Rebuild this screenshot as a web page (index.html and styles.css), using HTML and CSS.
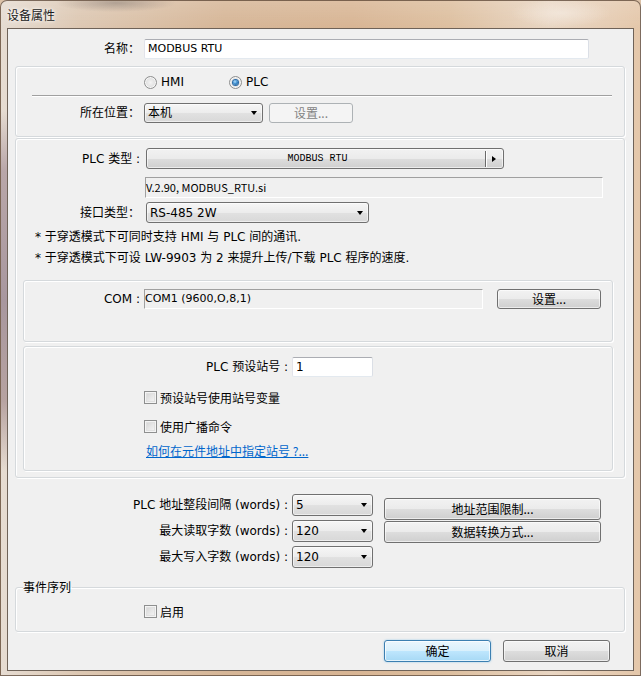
FILE: index.html
```html
<!DOCTYPE html>
<html lang="zh-CN">
<head>
<meta charset="utf-8">
<title>设备属性</title>
<link rel="stylesheet" href="styles.css">
</head>
<body>
<div class="window">
  <div class="titlebar"><span class="title">设备属性</span></div>
  <div class="client">
    <div class="row row-name">
      <span class="lbl w132">名称：</span>
      <div class="txt name-input">MODBUS RTU</div>
    </div>

    <div class="group g1">
      <div class="radios">
        <span class="opt opt-hmi"><span class="radio"></span><span>HMI</span></span>
        <span class="opt"><span class="radio on"></span><span>PLC</span></span>
      </div>
      <div class="sep"></div>
      <div class="row row-loc">
        <span class="lbl w124">所在位置：</span>
        <div class="combo loc-combo"><span class="ctext">本机</span><span class="arrow"></span></div>
        <div class="btn disabled loc-btn">设置...</div>
      </div>
    </div>

    <div class="group g2">
      <div class="row row-plc">
        <span class="lbl w124">PLC 类型 :</span>
        <div class="btn plc-btn"><span class="plc-text">MODBUS RTU</span><span class="plc-split"></span><span class="rarrow-wrap"><span class="rarrow"></span></span></div>
      </div>
      <div class="ro version">V.2.90, MODBUS_RTU.si</div>
      <div class="row row-if">
        <span class="lbl w124">接口类型：</span>
        <div class="combo if-combo"><span class="ctext">RS-485 2W</span><span class="arrow"></span></div>
      </div>
      <p class="note first">* 于穿透模式下可同时支持 HMI 与 PLC 间的通讯.</p>
      <p class="note">* 于穿透模式下可设 LW-9903 为 2 来提升上传/下载 PLC 程序的速度.</p>

      <div class="group inner com-box">
        <div class="row row-com">
          <span class="lbl w116">COM :</span>
          <div class="ro com-field">COM1 (9600,O,8,1)</div>
          <div class="btn com-btn">设置...</div>
        </div>
      </div>

      <div class="group inner station-box">
        <div class="row row-st">
          <span class="lbl w264">PLC 预设站号 :</span>
          <div class="txt st-input">1</div>
        </div>
        <div class="chkrow chk1"><span class="check"></span><span>预设站号使用站号变量</span></div>
        <div class="chkrow chk2"><span class="check"></span><span>使用广播命令</span></div>
        <div class="linkrow"><a class="link" href="#">如何在元件地址中指定站号 ?...</a></div>
      </div>
    </div>

    <div class="limits">
      <div class="lim-col">
        <div class="row lim-row">
          <span class="lbl w280">PLC 地址整段间隔 (words) :</span>
          <div class="combo lim-combo"><span class="ctext">5</span><span class="arrow"></span></div>
        </div>
        <div class="row lim-row">
          <span class="lbl w280">最大读取字数 (words) :</span>
          <div class="combo lim-combo"><span class="ctext">120</span><span class="arrow"></span></div>
        </div>
        <div class="row lim-row">
          <span class="lbl w280">最大写入字数 (words) :</span>
          <div class="combo lim-combo"><span class="ctext">120</span><span class="arrow"></span></div>
        </div>
      </div>
      <div class="lim-btns">
        <div class="btn wide-btn">地址范围限制...</div>
        <div class="btn wide-btn">数据转换方式...</div>
      </div>
    </div>

    <fieldset class="events">
      <legend class="legend">事件序列</legend>
      <div class="chkrow ev-row"><span class="check"></span><span>启用</span></div>
    </fieldset>

    <div class="actions">
      <div class="btn default act-ok">确定</div>
      <div class="btn act-cancel">取消</div>
    </div>
  </div>
</div>
</body>
</html>
```
FILE: styles.css
```css
* { box-sizing: border-box; }
html, body { margin: 0; padding: 0; }
body {
  width: 641px;
  height: 676px;
  overflow: hidden;
  font-family: "DejaVu Sans", "Noto Sans CJK SC", sans-serif;
  font-size: 12px;
  color: #000;
  background: #dcc2a8;
}

.window {
  width: 641px;
  height: 676px;
  border: 1px solid rgba(90, 70, 55, 0.75);
  border-radius: 7px 7px 0 0;
  padding: 0 6px 4px 6px;
  background:
    linear-gradient(180deg, rgba(0,0,0,0) 0, rgba(0,0,0,0) 110px, #b9a7a9 170px, #a8979e 300px, #b7a3a1 400px, rgba(0,0,0,0) 470px) 0 0 / 6px 100% no-repeat,
    radial-gradient(ellipse 60px 9px at 115px 2px, rgba(120,110,105,0.45), rgba(120,110,105,0)),
    radial-gradient(ellipse 50px 14px at 560px 12px, rgba(245,235,225,0.7), rgba(245,235,225,0)),
    linear-gradient(180deg, rgba(255,255,255,0.15) 0, rgba(255,255,255,0) 27px),
    linear-gradient(90deg, #e6dcd2 0%, #ddc8b3 12%, #d6b697 35%, #d8b594 55%, #ddbf9f 70%, #e9d6c3 86%, #e4c7aa 100%);
}

.titlebar {
  height: 27px;
  display: flex;
  align-items: center;
}
.title {
  font-family: "Noto Sans CJK SC", sans-serif;
  font-size: 12px;
  line-height: 14px;
  color: #1b1b1b;
  text-shadow: 0 0 5px #fff, 0 0 3px rgba(255,255,255,0.9);
  margin-top: 1px;
}

.client {
  width: 627px;
  height: 643px;
  border: 1px solid #6e6258;
  background: #f0f0f0;
  padding-top: 10px;
}

.row { display: flex; align-items: center; }
.lbl {
  flex: none;
  text-align: right;
  white-space: nowrap;
  line-height: 20px;
}
.w132 { width: 132px; }
.w124 { width: 124px; }
.w116 { width: 116px; }
.w264 { width: 264px; }
.w280 { width: 280px; }

/* text inputs */
.txt {
  flex: none;
  height: 20px;
  background: #fff;
  border: 1px solid;
  border-color: #abadb3 #dbdfe6 #e3e9ef #e2e3ea;
  border-radius: 2px;
  padding-left: 3px;
  line-height: 18px;
  font-size: 11px;
  white-space: nowrap;
}
.name-input { margin-left: 4px; width: 445px; }
.st-input { margin-left: 4px; width: 81px; font-size: 12px; }

/* read-only static edit */
.ro {
  height: 21px;
  background: #f0f0f0;
  border-top: 1px solid #a0a0a0;
  border-left: 1px solid #a0a0a0;
  border-right: 1px solid #fff;
  border-bottom: 1px solid #fff;
  line-height: 19px;
  white-space: nowrap;
}

/* combo boxes */
.combo {
  flex: none;
  display: flex;
  align-items: center;
  justify-content: space-between;
  border: 1px solid #707070;
  border-radius: 3px;
  background: linear-gradient(180deg, #f6f6f6 0%, #ececec 50%, #e1e1e1 51%, #d8d8d8 100%);
  box-shadow: inset 0 0 0 1px rgba(255,255,255,0.55);
  padding: 0 5px 0 3px;
  white-space: nowrap;
}
.ctext { line-height: 18px; }
.arrow {
  width: 0;
  height: 0;
  border-left: 3.5px solid transparent;
  border-right: 3.5px solid transparent;
  border-top: 4px solid #000;
  flex: none;
}

/* buttons */
.btn {
  flex: none;
  display: flex;
  align-items: center;
  justify-content: center;
  border: 1px solid #707070;
  border-radius: 3px;
  background: linear-gradient(180deg, #f2f2f2 0%, #ebebeb 50%, #dddddd 51%, #cfcfcf 100%);
  box-shadow: inset 0 0 0 1px rgba(255,255,255,0.6);
  white-space: nowrap;
  font-family: "Noto Sans CJK SC", sans-serif;
  font-size: 12px;
  line-height: 16px;
}
.btn.disabled {
  border-color: #adb2b5;
  background: #f4f4f4;
  box-shadow: none;
  color: #838383;
}
.btn.default {
  border-color: #3c7fb1;
  background: linear-gradient(180deg, #eaf6fd 0%, #d9f0fc 50%, #bee6fd 51%, #a7d9f5 100%);
  box-shadow: inset 0 0 0 1px rgba(255,255,255,0.7), 0 0 2px rgba(80,170,230,0.6);
}

/* group boxes */
.group {
  border: 1px solid #d5d9dc;
  border-radius: 3px;
  box-shadow: inset 1px 1px 0 #fff, 1px 1px 0 #fff;
}
.g1 {
  margin: 7px 0 0 7px;
  width: 610px;
  height: 71px;
}
.radios {
  margin-top: 5px;
  height: 20px;
  padding-left: 128px;
  display: flex;
  align-items: center;
}
.opt { display: inline-flex; align-items: center; gap: 4px; }
.opt-hmi { width: 85px; }
.radio {
  width: 13px;
  height: 13px;
  border-radius: 50%;
  border: 1px solid #8e8f8f;
  background: radial-gradient(circle at 50% 50%, #f4f4f4 0%, #e2e2e2 55%, #cfcfcf 100%);
  box-shadow: inset 0 0 0 1px #f8f8f8;
  display: flex;
  align-items: center;
  justify-content: center;
  flex: none;
}
.radio.on::after {
  content: "";
  display: block;
  width: 5px;
  height: 5px;
  border-radius: 50%;
  background: radial-gradient(circle at 40% 35%, #b4e0ff 0%, #3d8fd0 45%, #1a4f86 100%);
  box-shadow: 0 0 0 1px #2a6aa8;
}
.sep {
  margin: 3px 0 0 16px;
  width: 580px;
  height: 2px;
  border-top: 1px solid #a0a0a0;
  border-bottom: 1px solid #fff;
}
.row-loc { margin-top: 6px; height: 20px; }
.loc-combo { margin-left: 4px; width: 119px; height: 20px; }
.loc-btn { margin-left: 6px; width: 84px; height: 20px; }

.g2 {
  margin: 1px 0 0 7px;
  width: 610px;
  height: 340px;
}
.row-plc { margin-top: 9px; height: 21px; }
.plc-btn {
  margin-left: 6px;
  width: 358px;
  height: 21px;
  justify-content: flex-start;
}
.plc-text {
  flex: 1;
  text-align: center;
  font-family: "Liberation Mono", monospace;
  font-size: 10px;
  padding-left: 3px;
}
.plc-split {
  width: 1px;
  height: 16px;
  background: #6a6a6a;
  box-shadow: 1px 0 0 #fff;
  flex: none;
}
.rarrow-wrap {
  width: 17px;
  display: flex;
  align-items: center;
  padding-left: 6px;
}
.rarrow {
  width: 0;
  height: 0;
  border-top: 3.5px solid transparent;
  border-bottom: 3.5px solid transparent;
  border-left: 4px solid #000;
}
.version {
  margin: 8px 0 0 129px;
  width: 458px;
  font-family: "Noto Sans CJK SC", sans-serif;
  font-size: 11px;
}
.row-if { margin-top: 4px; height: 21px; }
.if-combo { margin-left: 6px; width: 223px; height: 21px; }
.note {
  margin: 0;
  padding-left: 19px;
  line-height: 21px;
  white-space: nowrap;
}
.note.first { margin-top: 4px; }

.inner { margin-left: 7px; width: 590px; }
.com-box { margin-top: 11px; height: 62px; }
.row-com { margin-top: 8px; height: 20px; }
.com-field {
  margin-left: 4px;
  width: 339px;
  height: 20px;
  line-height: 18px;
  font-size: 11px;
}
.com-btn { margin-left: 14px; width: 104px; height: 20px; }

.station-box { margin-top: 4px; height: 125px; }
.row-st { margin-top: 10px; height: 20px; }
.chkrow {
  display: flex;
  align-items: center;
  height: 20px;
  gap: 3px;
  font-family: "Noto Sans CJK SC", sans-serif;
}
.chk1 { margin-top: 10px; padding-left: 120px; }
.chk2 { margin-top: 9px; padding-left: 120px; }
.check {
  width: 13px;
  height: 13px;
  flex: none;
  border: 1px solid #8e8f8f;
  background: linear-gradient(135deg, #cfcfcf 0%, #e6e6e6 50%, #f8f8f8 100%);
  box-shadow: inset 0 0 0 1px #f4f4f4, inset 0 0 0 2px #e0e0e0;
}
.linkrow {
  margin-top: 5px;
  height: 20px;
  padding-left: 122px;
  display: flex;
  align-items: center;
}
.link {
  color: #0066cc;
  text-decoration: underline;
  font-family: "Noto Sans CJK SC", sans-serif;
  line-height: 16px;
}

.limits {
  margin-top: 16px;
  display: flex;
  align-items: flex-start;
}
.lim-col { display: flex; flex-direction: column; gap: 4px; }
.lim-row { height: 22px; }
.lim-combo { margin-left: 4px; width: 81px; height: 22px; }
.lim-btns {
  margin: 4px 0 0 11px;
  display: flex;
  flex-direction: column;
  gap: 1px;
}
.wide-btn { width: 217px; height: 22px; }

.events {
  margin: 12px 0 0 7px;
  width: 610px;
  min-width: 0;
  padding: 0 0 10px 0;
  border: 1px solid #d5d9dc;
  border-radius: 3px;
  box-shadow: inset 1px 1px 0 #fff, 1px 1px 0 #fff;
}
.legend {
  margin-left: 7px;
  padding: 0 1px 0 0;
  line-height: 14px;
  font-family: "Noto Sans CJK SC", sans-serif;
}
.ev-row { margin-top: 7px; padding-left: 128px; }

.actions {
  margin-top: 8px;
  display: flex;
}
.act-ok { margin-left: 376px; width: 107px; height: 22px; }
.act-cancel { margin-left: 12px; width: 107px; height: 22px; }
```
